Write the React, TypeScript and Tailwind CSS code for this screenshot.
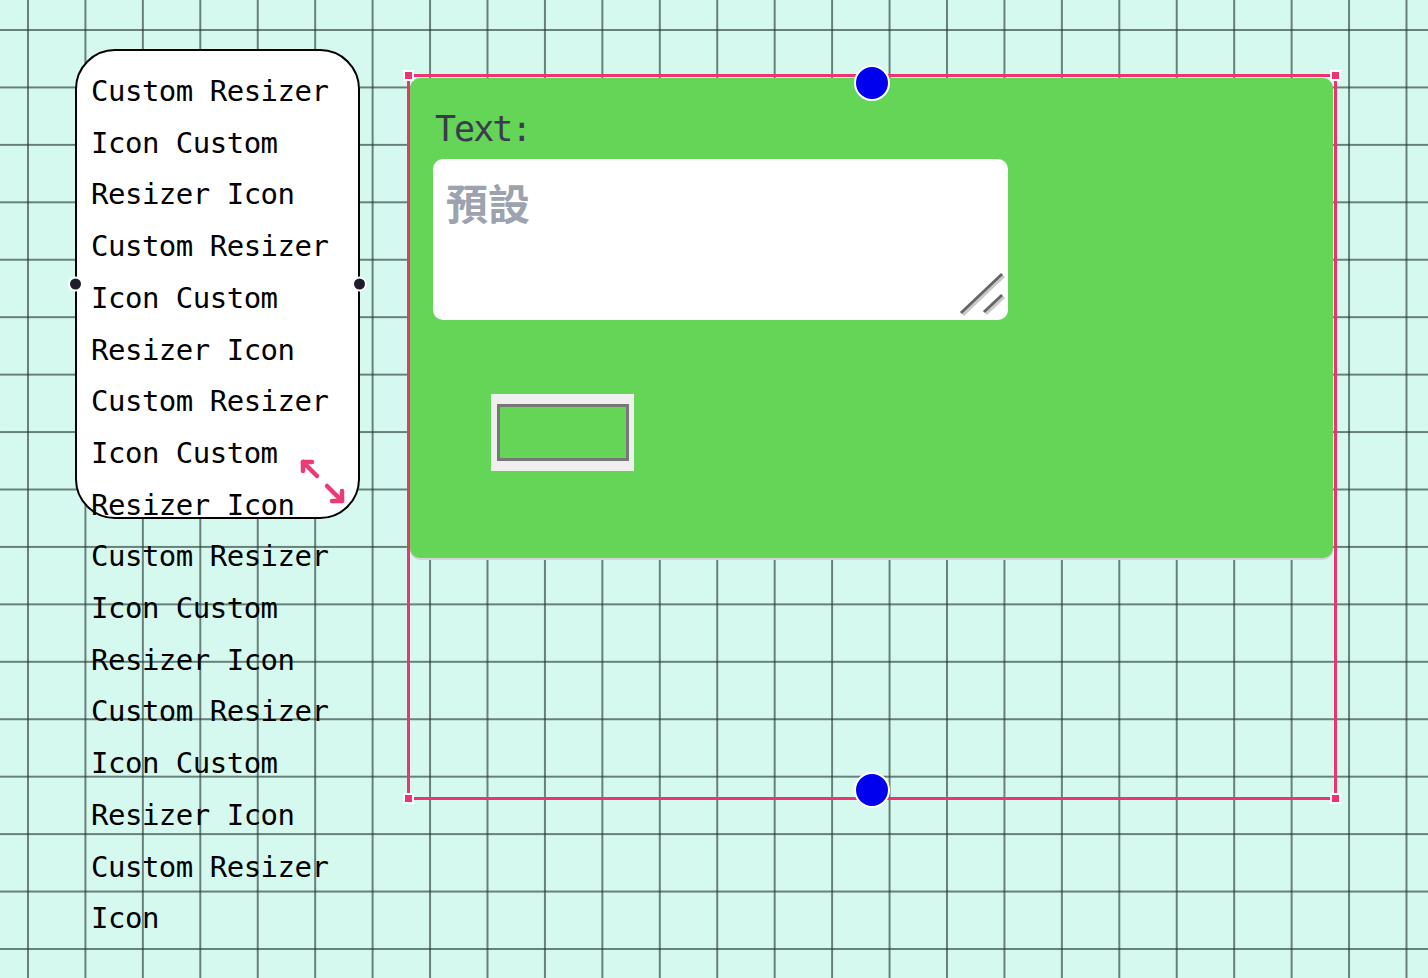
const words = Array.from({ length: 11 }, () => "Custom Resizer Icon").join(" ");

function SideDot({ side }: { side: "left" | "right" }) {
  return (
    <span
      className={`absolute top-1/2 -translate-y-1/2 size-[15px] rounded-full bg-[#1e1d2e] border-2 border-white ${
        side === "left" ? "left-[-9px]" : "right-[-9px]"
      }`}
    />
  );
}

function Corner({ pos }: { pos: string }) {
  return (
    <span
      className={`absolute size-[11px] bg-[#ec3470] border-2 border-white ${pos}`}
    />
  );
}

export default function App() {
  return (
    <div
      className="w-[1428px] h-[978px] overflow-hidden bg-[#d5f8ef] bg-[linear-gradient(to_right,rgba(35,55,50,0.62)_2px,transparent_2px),linear-gradient(to_bottom,rgba(35,55,50,0.62)_2px,transparent_2px)] bg-[size:57.45px_57.45px] bg-[position:27px_29px]"
    >
      <div className="flex items-start pl-[75px] pt-[49px]">
        {/* resizable note */}
        <div className="relative w-[285px] h-[470px] shrink-0 bg-white border-2 border-black rounded-[40px] pl-[14px] pr-[10px] pt-[15px]">
          <p className="font-['DejaVu_Sans_Mono',monospace] text-[29px] tracking-[-0.5px] leading-[51.7px] text-black">
            {words}
          </p>
          <SideDot side="left" />
          <SideDot side="right" />
          <svg
            className="absolute left-[222px] top-[407px]"
            width="48"
            height="48"
            viewBox="0 0 48 48"
            fill="none"
            stroke="#ec3b74"
            strokeWidth="4.5"
            strokeLinecap="round"
            strokeLinejoin="round"
          >
            <path d="M4 4 L18 18" />
            <path d="M4 13 L4 4 L13 4" />
            <path d="M28 28 L43 43" />
            <path d="M43 33 L43 43 L33 43" />
          </svg>
        </div>

        {/* selection frame */}
        <div className="relative ml-[47px] mt-[25px] w-[930px] h-[726px] border-[3px] border-[#ec3470]">
          <Corner pos="left-[-7px] top-[-7px]" />
          <Corner pos="right-[-7px] top-[-7px]" />
          <Corner pos="left-[-7px] bottom-[-7px]" />
          <Corner pos="right-[-7px] bottom-[-7px]" />

          <div className="mt-[1px] w-[923px] h-[480px] rounded-[10px] bg-[#64d556] shadow-[0_2px_0_0_#d2d3da] pl-[23px] pt-[31px]">
            <div className="font-['DejaVu_Sans_Mono',monospace] text-[35px] tracking-[-2px] leading-[40px] text-[#3b3b4f] pl-[2px]">
              Text:
            </div>
            <div className="relative mt-[10px] w-[575px] h-[161px]">
              <textarea
                className="w-full h-full resize-none rounded-[10px] bg-white outline-none pl-[13px] pt-[19px] font-['Noto_Sans_CJK_TC',sans-serif] font-bold text-[42px] leading-[48px] text-[#333] placeholder:text-[#9ca3af]"
                placeholder="預設"
              />
              <svg
                className="absolute right-0 bottom-0 pointer-events-none"
                width="50"
                height="50"
                viewBox="0 0 50 50"
                fill="none"
                strokeLinecap="square"
              >
                <path d="M6 44 L45 7" stroke="#c8c8c8" strokeWidth="3" />
                <path d="M29 43 L45 28" stroke="#c8c8c8" strokeWidth="3" />
                <path d="M4 42 L43 5" stroke="#666" strokeWidth="3" />
                <path d="M27 41 L43 26" stroke="#666" strokeWidth="3" />
              </svg>
            </div>
            <div className="mt-[74px] ml-[58px] w-[143px] h-[77px] bg-[#efefef] pl-[6px] pr-[5px] py-[10px] flex">
              <div className="flex-1 border-[3px] border-[#777] bg-[#64d556]" />
            </div>
          </div>

          <span className="absolute left-1/2 -translate-x-1/2 top-[-12px] size-[36px] rounded-full bg-[#0000ee] border-2 border-white" />
          <span className="absolute left-1/2 -translate-x-1/2 bottom-[-11px] size-[36px] rounded-full bg-[#0000ee] border-2 border-white" />
        </div>
      </div>
    </div>
  );
}
